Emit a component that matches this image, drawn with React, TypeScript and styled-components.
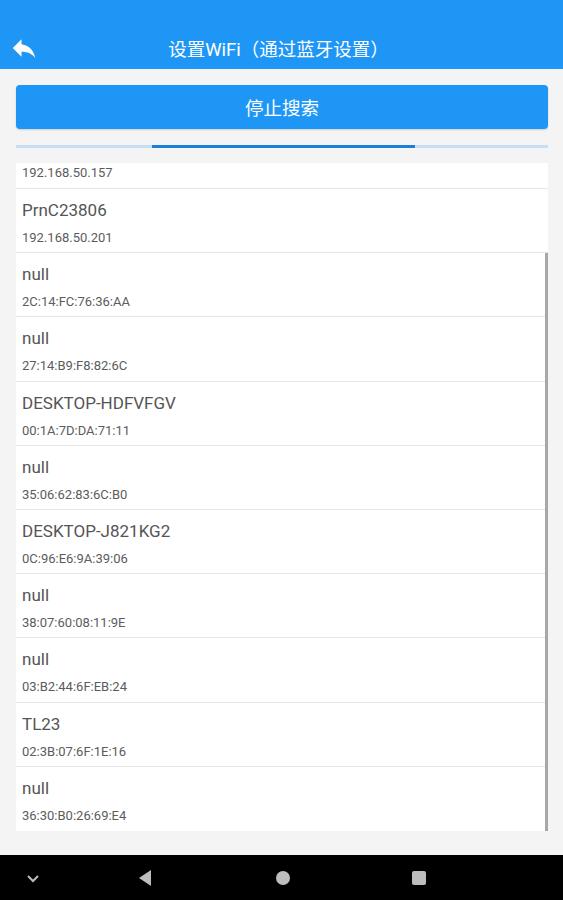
import React from "react";
import styled, { createGlobalStyle } from "styled-components";

const GlobalStyle = createGlobalStyle`
  html, body {
    margin: 0;
    padding: 0;
    background: #f4f4f4;
  }
  * {
    box-sizing: border-box;
  }
  body {
    font-family: Roboto, "Noto Sans CJK SC", "Noto Sans", sans-serif;
  }
`;

const devices = [
  { name: "PrnC23806", addr: "192.168.50.201" },
  { name: "null", addr: "2C:14:FC:76:36:AA" },
  { name: "null", addr: "27:14:B9:F8:82:6C" },
  { name: "DESKTOP-HDFVFGV", addr: "00:1A:7D:DA:71:11" },
  { name: "null", addr: "35:06:62:83:6C:B0" },
  { name: "DESKTOP-J821KG2", addr: "0C:96:E6:9A:39:06" },
  { name: "null", addr: "38:07:60:08:11:9E" },
  { name: "null", addr: "03:B2:44:6F:EB:24" },
  { name: "TL23", addr: "02:3B:07:6F:1E:16" },
  { name: "null", addr: "36:30:B0:26:69:E4" },
];

export default function App() {
  return (
    <Screen>
      <GlobalStyle />
      <Header>
        <TitleRow>
          <BackButton>
            <svg width="30" height="30" viewBox="0 0 24 24">
              <path
                d="M10 9V5l-7 7 7 7v-4.1c5 0 8.5 1.6 11 5.1-1-5-4-10-11-11z"
                fill="#fff"
              />
            </svg>
          </BackButton>
          <Title>设置WiFi（通过蓝牙设置）</Title>
        </TitleRow>
      </Header>

      <Content>
        <SearchButton>停止搜索</SearchButton>
        <Progress>
          <ProgressBar />
        </Progress>

        <ListViewport>
          <List>
            {/* scrolled-off row: only its address is still visible */}
            <PartialItem>
              <Addr>192.168.50.157</Addr>
            </PartialItem>
            {devices.map((d, i) => (
              <Item key={i} $last={i === devices.length - 1}>
                <Name>{d.name}</Name>
                <Addr>{d.addr}</Addr>
              </Item>
            ))}
          </List>
          <ScrollThumb />
        </ListViewport>
      </Content>

      <NavBar>
        <NavSlot>
          <svg width="16" height="16" viewBox="0 0 16 16">
            <path d="M3 6l5 5 5-5" stroke="#bdbdbd" strokeWidth="2" fill="none" />
          </svg>
        </NavSlot>
        <NavSlot>
          <svg width="16" height="18" viewBox="0 0 16 18">
            <path d="M14 1v16L2 9z" fill="#bdbdbd" />
          </svg>
        </NavSlot>
        <NavSlot>
          <HomeDot />
        </NavSlot>
        <NavSlot>
          <RecentSquare />
        </NavSlot>
      </NavBar>
    </Screen>
  );
}

const Screen = styled.div`
  width: 563px;
  height: 900px;
  display: flex;
  flex-direction: column;
  background: #f4f4f4;
  overflow: hidden;
`;

const Header = styled.header`
  height: 69px;
  padding-top: 30px;
  background: #1e96f6;
`;

const TitleRow = styled.div`
  position: relative;
  height: 36px;
  display: flex;
  align-items: center;
  justify-content: center;
`;

const BackButton = styled.div`
  position: absolute;
  left: 8px;
  top: 2px;
  width: 32px;
  height: 32px;
  display: flex;
  align-items: center;
  justify-content: center;
`;

const Title = styled.h1`
  margin: 0 0 0 -6px;
  font-size: 18.5px;
  font-weight: 400;
  color: #fff;
`;

const Content = styled.main`
  flex: 1;
  display: flex;
  flex-direction: column;
  padding: 16px 15px 0 16px;
`;

const SearchButton = styled.button`
  height: 44px;
  border: none;
  border-radius: 4px;
  background: #1e96f6;
  color: #fff;
  font-family: Roboto, "Noto Sans CJK SC", sans-serif;
  font-size: 18.5px;
  box-shadow: 0 1px 2px rgba(0, 0, 0, 0.15);
`;

const Progress = styled.div`
  margin-top: 16px;
  height: 3px;
  background: #c6dff4;
  display: flex;
  padding-left: 136px;
`;

const ProgressBar = styled.div`
  width: 263px;
  height: 3px;
  background: #1c7fd9;
`;

const ListViewport = styled.div`
  position: relative;
  margin-top: 15px;
  height: 668px;
  overflow: hidden;
`;

const List = styled.ul`
  margin: 0;
  padding: 0;
  list-style: none;
  background: #fff;
`;

const PartialItem = styled.li`
  height: 26px;
  padding: 2px 0 0 6px;
  border-bottom: 1px solid #e6e6e6;
`;

const Item = styled.li<{ $last?: boolean }>`
  height: 64.2px;
  padding: 11px 0 0 6px;
  background: #fff;
  border-bottom: ${(p) => (p.$last ? "none" : "1px solid #e6e6e6")};
  display: flex;
  flex-direction: column;
  gap: 10px;
`;

const Name = styled.div`
  font-size: 17px;
  color: #555;
  line-height: 20px;
`;

const Addr = styled.div`
  font-size: 13px;
  color: #5c5c5c;
  line-height: 16px;
`;

const ScrollThumb = styled.div`
  position: absolute;
  right: 0;
  top: 90px;
  bottom: 0;
  width: 3px;
  background: #a8a8a8;
`;

const NavBar = styled.nav`
  margin-top: 24px;
  height: 45px;
  background: #000;
  display: grid;
  grid-template-columns: 66px 158px 118px 154px;
  align-items: center;
  justify-items: center;
`;

const NavSlot = styled.div`
  display: flex;
  align-items: center;
  justify-content: center;
`;

const HomeDot = styled.div`
  width: 14px;
  height: 14px;
  border-radius: 50%;
  background: #bdbdbd;
`;

const RecentSquare = styled.div`
  width: 14px;
  height: 14px;
  border-radius: 2px;
  background: #bdbdbd;
`;
